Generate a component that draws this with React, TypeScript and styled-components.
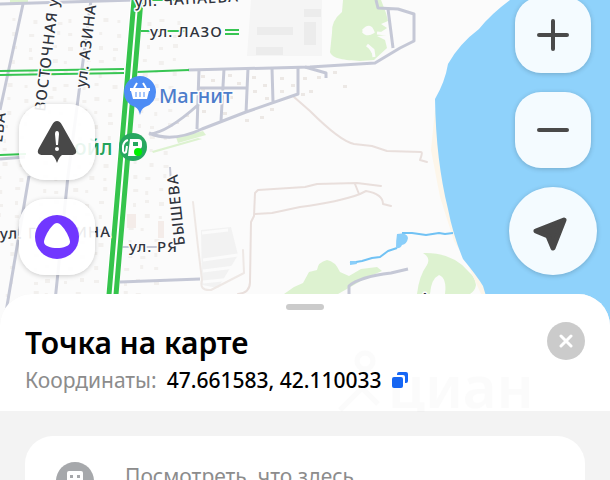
import React from "react";
import styled, { createGlobalStyle } from "styled-components";

const GlobalStyle = createGlobalStyle`
  * { box-sizing: border-box; }
  body { margin: 0; background: #f3f3f3; font-family: "Noto Sans", "Open Sans", sans-serif; }
  button { font: inherit; border: 0; padding: 0; cursor: pointer; }
`;

const Page = styled.main`
  display: flex;
  flex-direction: column;
  height: 100vh;
  overflow: hidden;
`;

const MapArea = styled.section`
  position: relative;
  flex: none;
`;

const MapCanvas = styled.svg`
  display: block;
  width: 100%;
  height: 330px;
  background: #fafafa;
`;

const Label = styled.text<{ $tone?: string; $size?: number; $spacing?: number }>`
  font-family: "Noto Sans", sans-serif;
  font-size: ${(p) => p.$size ?? 15}px;
  font-weight: 500;
  fill: ${(p) => p.$tone ?? "#30343d"};
  stroke: #fcfcfc;
  stroke-width: 3px;
  stroke-linejoin: round;
  paint-order: stroke;
  letter-spacing: ${(p) => p.$spacing ?? 1}px;
`;

const Controls = styled.div`
  position: absolute;
  inset: 0 0 36px;
  display: flex;
  justify-content: space-between;
  align-items: flex-end;
  padding: 0 13px 19px 19px;
`;

const ControlColumn = styled.div`
  display: flex;
  flex-direction: column;
  align-items: center;
  gap: 19px;
`;

const MapButton = styled.button<{ $round?: boolean }>`
  display: grid;
  place-items: center;
  width: ${(p) => (p.$round ? 88 : 76)}px;
  height: ${(p) => (p.$round ? 88 : 76)}px;
  border-radius: ${(p) => (p.$round ? "50%" : "26px")};
  background: rgba(255, 255, 255, 0.9);
  box-shadow: 0 1px 5px rgba(0, 0, 0, 0.2);
  color: #4a4a4a;
`;

const Sheet = styled.section`
  position: relative;
  flex: 1;
  margin-top: -36px;
  border-radius: 32px 32px 0 0;
  background: #f3f3f3;
  overflow: hidden;
`;

const SheetHeader = styled.header`
  height: 117px;
  padding: 10px 25px 0;
  background: #fff;
`;

const Grip = styled.div`
  width: 38px;
  height: 6px;
  margin: 0 auto;
  border-radius: 3px;
  background: #cbcbcb;
`;

const TitleRow = styled.div`
  display: flex;
  justify-content: space-between;
  align-items: flex-start;
  height: 38px;
  margin-top: 12px;
`;

const Title = styled.h1`
  margin: 0;
  font-size: 30px;
  line-height: 42px;
  font-weight: 600;
  color: #000;
`;

const CloseButton = styled.button`
  display: grid;
  place-items: center;
  width: 38px;
  height: 38px;
  border-radius: 50%;
  background: #cbcbcb;
  color: #fff;
`;

const Coordinates = styled.div`
  display: flex;
  align-items: center;
  gap: 10px;
  margin-top: 6px;
  font-size: 21px;
  line-height: 28px;
  white-space: nowrap;
`;

const Caption = styled.span`
  color: #8c8c8c;
`;

const Value = styled.span`
  font-weight: 500;
  color: #000;
`;

const CopyButton = styled.button`
  display: grid;
  background: none;
`;

const Watermark = styled.svg`
  position: absolute;
  top: 56px;
  right: 70px;
  width: 210px;
  height: 62px;
  pointer-events: none;
`;

const WatermarkText = styled.text`
  font: 600 58px "Noto Sans", sans-serif;
`;

const PlaceCard = styled.a`
  display: flex;
  align-items: flex-start;
  gap: 31px;
  height: 90px;
  margin: 25px 25px 0;
  padding: 26px 31px 0;
  border-radius: 28px;
  background: #fff;
  color: #8c8c8c;
  font-size: 21px;
  line-height: 28px;
  text-decoration: none;
  white-space: nowrap;
`;

const CardIcon = styled.svg`
  flex: none;
  width: 38px;
  height: 38px;
`;

const houseColumns = [14, 32, 57, 69, 89, 102, 117, 148, 161, 176];
const houseRows = Array.from({ length: 22 }, (_, i) => 18 + i * 13);

function Houses() {
  return (
    <g fill="#f2f0ee">
      {houseColumns.flatMap((x, c) =>
        houseRows.map((y, r) => (
          <rect
            key={`${c}-${r}`}
            x={x - y * 0.09 + ((r * 5 + c * 3) % 4)}
            y={y + ((r + c * 7) % 5)}
            width={3 + ((r + c) % 3)}
            height={3 + ((r * 3 + c) % 2)}
          />
        )),
      )}
      {[
        [201, 75], [211, 79], [201, 89], [212, 93], [228, 74], [237, 82], [229, 96],
        [252, 76], [263, 84], [253, 90], [265, 97], [280, 77], [291, 84], [280, 90],
        [303, 77], [301, 93], [309, 90], [343, 85], [317, 76], [333, 71], [202, 110],
        [185, 114], [175, 121], [260, 116], [245, 119], [270, 108], [223, 112],
      ].map(([x, y]) => (
        <rect key={`${x}-${y}`} x={x} y={y} width="4" height="3" fill="#ece8e5" />
      ))}
    </g>
  );
}

function CityMap() {
  return (
    <MapCanvas viewBox="0 0 610 330" preserveAspectRatio="xMidYMin slice" role="img" aria-label="Карта">
      <rect width="610" height="330" fill="#fbfbfb" />
      <Houses />

      <g fill="#f2f2f2">
        <path d="M251 0h71v56h-75z" fill="#f5f5f5" />
        <path d="M257 27h36v8h-36zM256 47h27v8h-27zM304 22h12v23h-12zM304 9h17v8h-17z" fill="#ececec" />
        <path d="M201 230l30-3 7 28-20 33-16-3z" fill="#f2f2f2" />
        <path d="M127 214h9v14h-9z" fill="#f4ece9" />
        <path d="M158 221h6v17h-6z" fill="#f4ece9" />
      </g>
      <path d="M202 233l26-3M203 260l35-5M203 271l32-4M203 282l29-3" stroke="#fbfbfb" strokeWidth="3" />

      <g fill="#ddf2d0">
        <path d="M343 0h38l5 13 2 8-7 3 6 4-6 4 6 3-10 1 8 4 2 8-13 12-14 1c-15-1-28-2-30-9l2-19q-1-12 10-21z" />
        <path d="M176 137l27-6 3 4-28 8z" />
        <path d="M152 151l46-13 4 1-21 6-28 8z" />
        <path d="M10 0h18v3H10z" />
        <path d="M284 294l10-7 9-4 6-11 8-2q1-8 10-10 8 1 13 12l9 4 12-7 16-2 5 4-14 6-30 17z" />
        <path d="M423 253q30-1 46 19 6 5 7 13-1 6-6 9h-53q2-18 10-29 4-7-4-12z" />
      </g>
      <path d="M430 294q1-15 9-19 8 3 6 19z" fill="#fbfbfb" />
      <path d="M363 31q7-8 10 1-6 4-10-1M377 33l10 1M367 45l6 5 1 7" stroke="#fbfbfb" strokeWidth="3" fill="#fbfbfb" />

      <path d="M435 110l-4 40 9 47 14 44 14 24 13 29h30V60z" fill="#fdf6ea" />
      <path d="M510 0q-19 14-31 29-20 15-31 35-3 18-13 35 1 62 13 110 5 26 15 50 14 17 20 27l3 10v34h124V0z" fill="#8fd2fb" />
      <path d="M480 0h29q-16 9-30 28z" fill="#fbfbfb" />

      <g fill="none" stroke="#e9dfdc" strokeWidth="2" strokeLinejoin="round" strokeLinecap="round">
        <path d="M294 97l16 14q30 30 44 33l18 2 15 5 34 1q2 0-1 8l7 2" />
        <path d="M381 186l-24-3-40 1-12 3-47 3-3 3-1 23-3 6-1 60q0 11-12 12" />
        <path d="M255 214l17-1 28-6q39-5 60-13l6-3q17 3 17 13l8 2M355 184l4 10" />
        <path d="M193 202l5 45 4 33q-3 11 9 10l33-17-1-23" stroke="#eee8e5" />
      </g>
      <path
        d="M350 263l12-2 10-3 8-1 8-6 9-3M402 233l10 0 14 2 13-2 6 1 8-1"
        fill="none"
        stroke="#71c2f4"
        strokeWidth="2"
        strokeLinejoin="round"
      />
      <path d="M397 234q10-2 11 4-1 6-6 7-2 4-6 3 0-8 1-14zM350 261l6 0 1 3-7 1z" fill="#8acef9" />

      <g fill="none" stroke="#c5c8d6" strokeWidth="3" strokeLinejoin="round">
        <path d="M0 4l135-4" />
        <path d="M23 4L0 110M29 176L9 294l-6 36M91 0l-23 176-16 154" />
        <path d="M188 70l122-3 65-4 25-15 14-7V14l-16-5-20-1-2-8M388 9l5 39" />
        <path d="M199 69l-2 60M224 69l-3 52M248 68l-2 45M272 68l1 34M298 68v26l-52 18-44 17q-30 14-53 4M149 134q18-1 50-30M197 88h51M305 67l21 6v5" />
        <path d="M120 282l80-3M349 294v-8q10-9 42-13l17-4" />
        <path d="M0 159l25-2" />
        <path d="M170 167l1 16M122 247h40" strokeWidth="2" />
      </g>

      <g stroke="#38c553" strokeWidth="2">
        <path d="M0 71l124-2M0 75l124-2M136 72l53-2M0 155l26-1M141 31h45M225 30h14M225 34h14M150 0h30" />
      </g>
      <path d="M137 0L109 330" stroke="#fff" strokeWidth="13" />
      <g stroke="#35c44c" strokeWidth="5">
        <path d="M134 0l-28 330M141 0l-28 330" />
      </g>

      <Label x="135" y="7" transform="rotate(-3 135 7)">ул. ЧАПАЕВА</Label>
      <Label x="150" y="37">ул. ЛАЗО</Label>
      <Label transform="translate(45 112) rotate(-83)">ВОСТОЧНАЯ ул.</Label>
      <Label transform="translate(86 88) rotate(-83)">ул. АЗИНА</Label>
      <Label transform="translate(2 143) rotate(-83)">ЕВА</Label>
      <Label x="0" y="239" transform="rotate(-1 0 239)">ул. ГАГАРИНА</Label>
      <Label x="129" y="252">ул. РЯ</Label>
      <Label transform="translate(185 245) rotate(-96)">БЫШЕВА</Label>
      <Label x="74" y="155" $tone="#25a35c" $size={21} $spacing={0}>ойл</Label>
      <Label x="159" y="103" $tone="#4d7dcb" $size={20} $spacing={0}>Магнит</Label>
      <Label x="420" y="303">Ак</Label>

      <g>
        <path d="M140 76a16 16 0 0 1 16 16q0 11-11 15-4 2-5 8-1-6-5-8-11-4-11-15a16 16 0 0 1 16-16z" fill="#4d8cf5" />
        <path d="M130 88h20v3h-1l-2 8h-14l-2-8h-1z" fill="#fff" />
        <path d="M134 88l3-5M146 88l-3-5" stroke="#fff" strokeWidth="2" />
        <path d="M136 92v5M140 92v5M144 92v5" stroke="#4d8cf5" strokeWidth="1" />
      </g>
      <g>
        <circle cx="133" cy="147" r="14" fill="#27a760" />
        <path fillRule="evenodd" d="M130 139h8q4 0 4 4v3q0 3-4 3h-1v7h-9zM133 142v4h5v-4z" fill="#fff" />
        <path d="M128 140q-4 1-5 6v5q1 3 3 1l1-6" fill="none" stroke="#fff" strokeWidth="2" />
        <circle cx="138" cy="152" r="4" fill="#00f000" />
      </g>
    </MapCanvas>
  );
}

export default function App() {
  return (
    <>
      <GlobalStyle />
      <Page>
        <MapArea>
          <CityMap />
          <Controls>
            <ControlColumn>
              <MapButton aria-label="Дорожные события">
                <svg width="40" height="42" viewBox="0 0 40 42">
                  <path d="M20 0q3 0 5 4l13 23q4 7-5 7h-8q-3 2-5 8-2-6-5-8H7q-9 0-5-7L15 4q2-4 5-4z" fill="#484848" />
                  <path d="M18 13q0-3 2-3t2 3l-1 11h-2z" fill="#fff" />
                  <circle cx="20" cy="28" r="2" fill="#fff" />
                </svg>
              </MapButton>
              <MapButton aria-label="Алиса">
                <svg width="44" height="44" viewBox="0 0 44 44">
                  <circle cx="22" cy="22" r="22" fill="#7137ff" />
                  <path d="M22 8c5 0 13 14 13 19 0 4-7 6-13 6S9 31 9 27C9 22 17 8 22 8z" fill="#fff" />
                </svg>
              </MapButton>
            </ControlColumn>
            <ControlColumn>
              <MapButton aria-label="Приблизить">
                <svg width="32" height="32" viewBox="0 0 32 32" stroke="currentColor" strokeWidth="4" strokeLinecap="round">
                  <path d="M2 16h28M16 2v28" />
                </svg>
              </MapButton>
              <MapButton aria-label="Отдалить">
                <svg width="32" height="32" viewBox="0 0 32 32" stroke="currentColor" strokeWidth="4" strokeLinecap="round">
                  <path d="M2 16h28" />
                </svg>
              </MapButton>
              <MapButton $round aria-label="Моё местоположение">
                <svg width="40" height="40" viewBox="0 0 40 40">
                  <path
                    d="M31 9L3 20l12 5 5 12z"
                    fill="#484848"
                    stroke="#484848"
                    strokeWidth="5"
                    strokeLinejoin="round"
                  />
                </svg>
              </MapButton>
            </ControlColumn>
          </Controls>
        </MapArea>

        <Sheet>
          <SheetHeader>
            <Grip />
            <TitleRow>
              <Title>Точка на карте</Title>
              <CloseButton aria-label="Закрыть">
                <svg width="14" height="14" viewBox="0 0 14 14" stroke="currentColor" strokeWidth="3" strokeLinecap="round">
                  <path d="M2 2l10 10M12 2L2 12" />
                </svg>
              </CloseButton>
            </TitleRow>
            <Coordinates>
              <Caption>Координаты:</Caption>
              <Value>47.661583, 42.110033</Value>
              <CopyButton aria-label="Скопировать координаты">
                <svg width="16" height="16" viewBox="0 0 16 16" fill="#1767f5">
                  <rect y="5" width="11" height="11" rx="2" />
                  <path d="M5 3V2q0-2 2-2h7q2 0 2 2v7q0 2-2 2h-1V5q0-2-2-2z" />
                </svg>
              </CopyButton>
            </Coordinates>
          </SheetHeader>
          <Watermark viewBox="0 0 210 62" aria-hidden="true" opacity="0.012">
            <g fill="none" stroke="#000" strokeWidth="5">
              <circle cx="35" cy="11" r="8" />
              <path d="M10 60l22-22 16 16" />
            </g>
            <WatermarkText x="58" y="58">циан</WatermarkText>
          </Watermark>
          <PlaceCard href="#place">
            <CardIcon viewBox="0 0 38 38">
              <circle cx="19" cy="19" r="19" fill="#a6a8ab" />
              <rect x="11" y="9" width="16" height="21" rx="2" fill="#fff" />
              <path d="M14 13h3v3h-3zM21 13h3v3h-3zM14 19h3v3h-3zM21 19h3v3h-3z" fill="#a6a8ab" />
            </CardIcon>
            <span>Посмотреть, что здесь</span>
          </PlaceCard>
        </Sheet>
      </Page>
    </>
  );
}
